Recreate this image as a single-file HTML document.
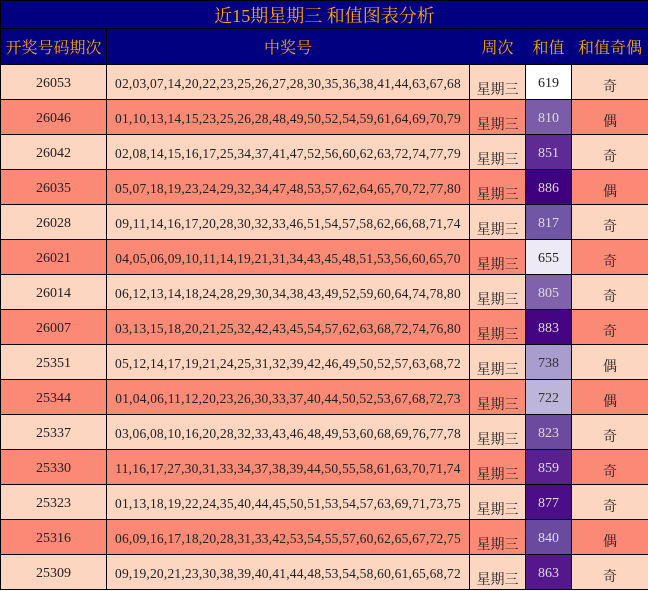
<!DOCTYPE html>
<html><head><meta charset="utf-8"><style>
body{margin:0;width:648px;height:591px;overflow:hidden;background:#fff;}
table{border-collapse:collapse;width:648px;table-layout:fixed;font-family:"Liberation Serif","Noto Serif CJK SC","Noto Sans CJK SC",serif;}
td{border:1px solid #000;text-align:center;padding:4px 0 0 0;font-size:14px;color:#222;height:30px;overflow:hidden;white-space:nowrap;}
.t td{background:#000080;color:#ffa500;font-size:18px;height:27px;padding:0;}
.h td{background:#000080;color:#ffa500;font-size:16px;height:35px;padding:0;}
.a td{background:#fdd6c1;}
.b td{background:#fa8a76;}
td.n{font-size:13.5px;letter-spacing:0.2px;}
td:nth-child(3) span{position:relative;top:5px;}
td:nth-child(5) span{position:relative;top:2px;}
</style></head><body>
<table>
<colgroup><col style="width:106px"><col style="width:363px"><col style="width:56px"><col style="width:46px"><col style="width:77px"></colgroup>
<tr class="t"><td colspan="5">近15期星期三 和值图表分析</td></tr>
<tr class="h"><td>开奖号码期次</td><td>中奖号</td><td>周次</td><td>和值</td><td>和值奇偶</td></tr>
<tr class="a"><td>26053</td><td class="n">02,03,07,14,20,22,23,25,26,27,28,30,35,36,38,41,44,63,67,68</td><td><span>星期三</span></td><td style="background:#fff;color:#222">619</td><td><span>奇</span></td></tr>
<tr class="b"><td>26046</td><td class="n">01,10,13,14,15,23,25,26,28,48,49,50,52,54,59,61,64,69,70,79</td><td><span>星期三</span></td><td style="background:#7a5ca8;color:#ddd">810</td><td><span>偶</span></td></tr>
<tr class="a"><td>26042</td><td class="n">02,08,14,15,16,17,25,34,37,41,47,52,56,60,62,63,72,74,77,79</td><td><span>星期三</span></td><td style="background:#5e2a96;color:#ddd">851</td><td><span>奇</span></td></tr>
<tr class="b"><td>26035</td><td class="n">05,07,18,19,23,24,29,32,34,47,48,53,57,62,64,65,70,72,77,80</td><td><span>星期三</span></td><td style="background:#3f0080;color:#ddd">886</td><td><span>偶</span></td></tr>
<tr class="a"><td>26028</td><td class="n">09,11,14,16,17,20,28,30,32,33,46,51,54,57,58,62,66,68,71,74</td><td><span>星期三</span></td><td style="background:#7156a6;color:#ddd">817</td><td><span>奇</span></td></tr>
<tr class="b"><td>26021</td><td class="n">04,05,06,09,10,11,14,19,21,31,34,43,45,48,51,53,56,60,65,70</td><td><span>星期三</span></td><td style="background:#eeeaf5;color:#222">655</td><td><span>奇</span></td></tr>
<tr class="a"><td>26014</td><td class="n">06,12,13,14,18,24,28,29,30,34,38,43,49,52,59,60,64,74,78,80</td><td><span>星期三</span></td><td style="background:#7f62ab;color:#ddd">805</td><td><span>奇</span></td></tr>
<tr class="b"><td>26007</td><td class="n">03,13,15,18,20,21,25,32,42,43,45,54,57,62,63,68,72,74,76,80</td><td><span>星期三</span></td><td style="background:#450582;color:#ddd">883</td><td><span>奇</span></td></tr>
<tr class="a"><td>25351</td><td class="n">05,12,14,17,19,21,24,25,31,32,39,42,46,49,50,52,57,63,68,72</td><td><span>星期三</span></td><td style="background:#a99dce;color:#333">738</td><td><span>偶</span></td></tr>
<tr class="b"><td>25344</td><td class="n">01,04,06,11,12,20,23,26,30,33,37,40,44,50,52,53,67,68,72,73</td><td><span>星期三</span></td><td style="background:#bdb5da;color:#333">722</td><td><span>偶</span></td></tr>
<tr class="a"><td>25337</td><td class="n">03,06,08,10,16,20,28,32,33,43,46,48,49,53,60,68,69,76,77,78</td><td><span>星期三</span></td><td style="background:#6b4aa0;color:#ddd">823</td><td><span>奇</span></td></tr>
<tr class="b"><td>25330</td><td class="n">11,16,17,27,30,31,33,34,37,38,39,44,50,55,58,61,63,70,71,74</td><td><span>星期三</span></td><td style="background:#5a2090;color:#ddd">859</td><td><span>奇</span></td></tr>
<tr class="a"><td>25323</td><td class="n">01,13,18,19,22,24,35,40,44,45,50,51,53,54,57,63,69,71,73,75</td><td><span>星期三</span></td><td style="background:#4b0d88;color:#ddd">877</td><td><span>奇</span></td></tr>
<tr class="b"><td>25316</td><td class="n">06,09,16,17,18,20,28,31,33,42,53,54,55,57,60,62,65,67,72,75</td><td><span>星期三</span></td><td style="background:#6a4a9f;color:#ddd">840</td><td><span>偶</span></td></tr>
<tr class="a"><td>25309</td><td class="n">09,19,20,21,23,30,38,39,40,41,44,48,53,54,58,60,61,65,68,72</td><td><span>星期三</span></td><td style="background:#54178c;color:#ddd">863</td><td><span>奇</span></td></tr>
</table>
</body></html>
